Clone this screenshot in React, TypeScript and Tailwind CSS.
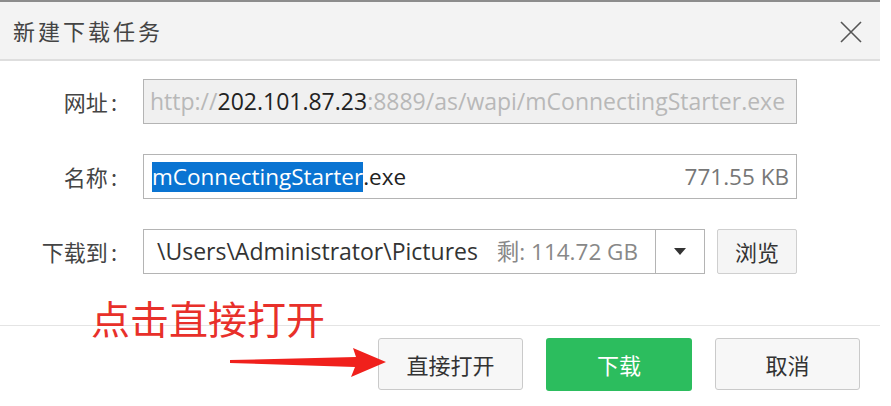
import React from "react";

const font = { fontFamily: '"Open Sans", "Noto Sans CJK SC", sans-serif' };
const cjk = { fontFamily: '"Noto Sans CJK SC", sans-serif' };

export default function App() {
  return (
    <div
      className="relative w-[891px] h-[406px] bg-white overflow-hidden text-[#333]"
      style={font}
    >
      <div className="w-[880px] border-t-2 border-[#8c8c8c]">
        {/* Header */}
        <div className="h-[59px] bg-[#f3f3f3] border-b-2 border-[#dedede] flex items-center justify-between pl-[13px] pr-[18px]">
          <span className="text-[22px] tracking-[3px] text-[#444]" style={cjk}>
            新建下载任务
          </span>
          <svg width="22" height="22" viewBox="0 0 22 22" className="mt-[2px]">
            <path d="M1 1 L21 21 M21 1 L1 21" stroke="#555" strokeWidth="1.6" />
          </svg>
        </div>

        {/* Body */}
        <div className="flex flex-col gap-[30px] pt-[18px] text-[22.5px]">
          <div className="flex items-center h-[45px]">
            <div className="w-[120px] pr-[3px] text-right text-[22px] text-[#444]" style={cjk}>网址<span className="ml-[3px]">:</span></div>
            <div className="ml-[23px] w-[654px] h-[45px] bg-[#f0f0f0] border border-[#b4b4b4] flex items-center pl-[6px] text-[23px] whitespace-nowrap overflow-hidden">
              <span className="text-[#b8b8b8]">http://</span>
              <span className="text-[#222]">202.101.87.23</span>
              <span className="text-[#b8b8b8]">:8889/as/wapi/mConnectingStarter.exe</span>
            </div>
          </div>

          <div className="flex items-center h-[45px]">
            <div className="w-[120px] pr-[3px] text-right text-[22px] text-[#444]" style={cjk}>名称<span className="ml-[3px]">:</span></div>
            <div className="ml-[23px] w-[654px] h-[45px] bg-white border border-[#b4b4b4] flex items-center pl-[8px] pr-[7px] whitespace-nowrap">
              <span className="bg-[#0a74d2] text-white leading-[30px]">mConnectingStarter</span>
              <span className="text-[#222]">.exe</span>
              <span className="ml-auto text-[#777]">771.55 KB</span>
            </div>
          </div>

          <div className="flex items-center h-[45px]">
            <div className="w-[120px] pr-[3px] text-right text-[22px] text-[#444]" style={cjk}>下载到<span className="ml-[3px]">:</span></div>
            <div className="ml-[23px] w-[562px] h-[45px] bg-white border border-[#b4b4b4] flex items-center whitespace-nowrap">
              <div className="flex-1 flex items-center pl-[13px] pr-[17px] overflow-hidden">
                <span className="text-[#333] text-[23px]">\Users\Administrator\Pictures</span>
                <span className="ml-auto text-[#888]">剩: 114.72 GB</span>
              </div>
              <div className="w-[49px] h-full border-l border-[#b4b4b4] flex items-center justify-center">
                <svg width="12" height="7" viewBox="0 0 12 7">
                  <path d="M0 0 L12 0 L6 7 Z" fill="#333" />
                </svg>
              </div>
            </div>
            <div className="ml-[12px] w-[80px] h-[45px] bg-[#f5f5f5] border border-[#cfcfcf] rounded-[2px] flex items-center justify-center text-[22px] text-[#333]" style={cjk}>
              浏览
            </div>
          </div>
        </div>

        {/* Separator */}
        <div className="mt-[51px] border-t border-[#e4e4e4]" />

        {/* Footer buttons */}
        <div className="flex justify-end gap-[23px] pt-[12px] pr-[20px] text-[22px]" style={cjk}>
          <div className="w-[145px] h-[52px] bg-[#f7f7f7] border border-[#cacaca] rounded-[3px] flex items-center justify-center text-[#333]">
            直接打开
          </div>
          <div className="w-[146px] h-[53px] bg-[#2cbd5e] rounded-[3px] flex items-center justify-center text-white">
            下载
          </div>
          <div className="w-[145px] h-[52px] bg-[#f7f7f7] border border-[#cacaca] rounded-[3px] flex items-center justify-center text-[#333]">
            取消
          </div>
        </div>
      </div>

      {/* Annotation */}
      <div
        className="absolute left-[91px] top-[294px] text-[39px] leading-[46px] text-[#e8302a]"
        style={cjk}
      >
        点击直接打开
      </div>
      <svg className="absolute left-[228px] top-[346px]" width="160" height="32" viewBox="0 0 160 32">
        <path d="M2 14 L128 11 L125 2 L158 16 L123 31 L127 21 L2 17 Z" fill="#f0201c" />
      </svg>
    </div>
  );
}
